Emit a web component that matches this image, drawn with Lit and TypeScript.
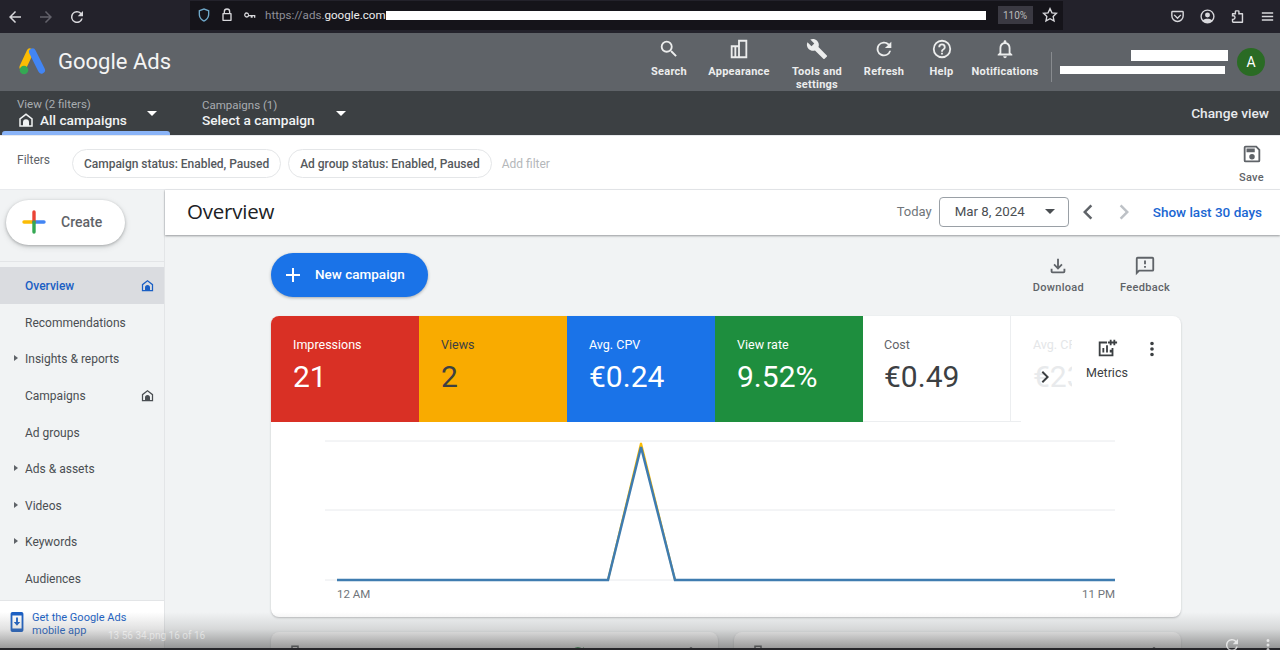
import { LitElement, html, css, svg } from "lit";
import { customElement } from "lit/decorators.js";

const ico = (d: string, size = 24, extra = "") =>
  html`<svg class="ic ${extra}" width=${size} height=${size} viewBox="0 0 24 24" fill="currentColor"><path d=${d}></path></svg>`;

const P = {
  search: "M15.5 14h-.79l-.28-.27A6.47 6.47 0 0 0 16 9.5 6.5 6.5 0 1 0 9.5 16c1.61 0 3.09-.59 4.23-1.57l.27.28v.79l5 4.99L20.490 19l-4.990-5zm-6 0C7.010 14 5 11.990 5 9.500S7.010 5 9.500 5 14 7.010 14 9.500 11.990 14 9.500 14z",
  appearance: "M11 2h10v20H3V8h8V2zm2 2v16h6V4h-6zM5 10v10h2V10H5zm4 0v10h2V10H9z",
  wrench: "M22.7 19l-9.1-9.1c.9-2.3.4-5-1.5-6.9-2-2-5-2.4-7.4-1.3L9 6 6 9 1.6 4.7C.4 7.1.9 10.1 2.9 12.1c1.9 1.9 4.6 2.4 6.9 1.5l9.1 9.1c.4.4 1 .4 1.4 0l2.300-2.300c.5-.4.5-1.100.1-1.400z",
  refresh: "M17.65 6.35A8 8 0 1 0 19.73 14h-2.08A6 6 0 1 1 12 6c1.66 0 3.14.69 4.22 1.78L13 11h7V4l-2.35 2.35z",
  help: "M11 18h2v-2h-2v2zm1-16a10 10 0 1 0 0 20 10 10 0 0 0 0-20zm0 18a8 8 0 1 1 0-16 8 8 0 0 1 0 16zm0-14a4 4 0 0 0-4 4h2a2 2 0 1 1 4 0c0 2-3 1.75-3 5h2c0-2.25 3-2.5 3-5a4 4 0 0 0-4-4z",
  bell: "M12 22a2 2 0 0 0 2-2h-4a2 2 0 0 0 2 2zm6-6v-5c0-3.07-1.63-5.64-4.5-6.32V4a1.5 1.5 0 0 0-3 0v.68C7.64 5.36 6 7.92 6 11v5l-2 2v1h16v-1l-2-2zm-2 1H8v-6c0-2.48 1.51-4.5 4-4.5s4 2.02 4 4.5v6z",
  home: "M12 3 3 10v11h18V10l-9-7zm7 16h-3v-4a4 4 0 0 0-8 0v4H5v-8l7-5.500 7 5.500v8z",
  save: "M17 3H5a2 2 0 0 0-2 2v14a2 2 0 0 0 2 2h14a2 2 0 0 0 2-2V7l-4-4zm2 16H5V5h11.17L19 7.83V19zm-7-7a3 3 0 1 0 0 6 3 3 0 0 0 0-6zM6 6h9v4H6V6z",
  download: "M18 15v3H6v-3H4v3a2 2 0 0 0 2 2h12a2 2 0 0 0 2-2v-3h-2zm-1-4-1.41-1.41L13 12.17V4h-2v8.17L8.41 9.59 7 11l5 5 5-5z",
  feedback: "M20 2H4a2 2 0 0 0-2 2v18l4-4h14a2 2 0 0 0 2-2V4a2 2 0 0 0-2-2zm0 14H5.17L4 17.17V4h16v12zM11 12h2v2h-2v-2zm0-6h2v4h-2V6z",
  metrics: "M19 3v2h-2V3h-2v2h-2v2h2v2h2V7h2v2h2V7h2V5h-2V3h-2zM3 5v16h16v-9h-2v7H5V7h7V5H3zm4 7h2v5H7v-5zm4-3h2v8h-2V9zm4 5h2v3h-2v-3z",
  dots: "M12 8a2 2 0 1 0 0-4 2 2 0 0 0 0 4zm0 2a2 2 0 1 0 0 4 2 2 0 0 0 0-4zm0 6a2 2 0 1 0 0 4 2 2 0 0 0 0-4z",
  left: "M15.4 7.4 14 6l-6 6 6 6 1.4-1.4L10.8 12z",
  right: "M8.6 16.6 10 18l6-6-6-6-1.4 1.4L13.2 12z",
  plus: "M19 13h-6v6h-2v-6H5v-2h6V5h2v6h6v2z",
  phone: "M17 1H7a2 2 0 0 0-2 2v18a2 2 0 0 0 2 2h10a2 2 0 0 0 2-2V3a2 2 0 0 0-2-2zM7 5h10v14H7V5zm4 2h2v5h2.5L12 16l-3.5-4H11V7z",
};

const tools = [
  ["Search", P.search],
  ["Appearance", P.appearance],
  ["Tools and settings", P.wrench],
  ["Refresh", P.refresh],
  ["Help", P.help],
  ["Notifications", P.bell],
];
const nav: [string, boolean, boolean][] = [
  ["Recommendations", false, false],
  ["Insights & reports", true, false],
  ["Campaigns", false, true],
  ["Ad groups", false, false],
  ["Ads & assets", true, false],
  ["Videos", true, false],
  ["Keywords", true, false],
  ["Audiences", false, false],
];
const tiles = [
  ["Impressions", "21", "red"],
  ["Views", "2", "yellow"],
  ["Avg. CPV", "€0.24", "blue"],
  ["View rate", "9.52%", "green"],
  ["Cost", "€0.49", "plain"],
];

@customElement("app-root")
export class AppRoot extends LitElement {
  static styles = css`
    :host { display: block; position: relative; width: 1280px; height: 650px; overflow: hidden; background: #f1f3f4; font-family: Roboto, "Liberation Sans", sans-serif; color: #3c4043; }
    .ic { display: block; flex: none; }
    .browser { height: 33px; background: #23222b; display: flex; align-items: center; color: #d8d8dc; }
    .bnav { width: 190px; display: flex; align-items: center; gap: 13px; padding-left: 6px; box-sizing: border-box; }
    .bnav .off { color: #63626b; }
    .url { width: 873px; height: 29px; margin-top: -3px; background: #15141a; display: flex; align-items: center; padding-left: 6px; box-sizing: border-box; font-size: 11.6px; position: relative; }
    .url .shield { color: #6fa8c9; }
    .url .lock { margin-left: 7px; }
    .url .key { margin: 0 7px; }
    .url .dim { color: #8f8f98; }
    .url .host { color: #eee; }
    .redact { background: #fff; height: 9px; }
    .url .redact { width: 600px; }
    .zoom { margin-left: 12px; width: 35px; height: 18px; background: #3a3942; color: #bbb; font-size: 10px; display: flex; align-items: center; justify-content: center; }
    .star { margin-left: 8px; fill: none; stroke: currentColor; stroke-width: 1.800; }
    .bright { margin-left: auto; display: flex; align-items: center; gap: 13px; padding-right: 4px; }
    .head { height: 58px; background: #5f6368; display: flex; align-items: center; color: #fff; padding-left: 18px; box-sizing: border-box; }
    .logo { display: flex; align-items: center; gap: 11px; font-size: 22px; font-family: Roboto, sans-serif; color: #f4f4f4; margin-top: -1px; }
    .tools { margin-left: auto; display: flex; align-items: flex-start; height: 58px; padding-top: 5px; box-sizing: border-box; }
    .tool { display: flex; flex-direction: column; align-items: center; font-size: 11px; font-weight: 700; line-height: 13px; text-align: center; color: #eceded; letter-spacing: .25px; }
    .tool svg { margin-bottom: 5px; }
    .vsep { width: 1px; height: 30px; background: #888b8f; margin: 10px 0 0 12px; }
    .account { width: 228px; height: 58px; position: relative; flex: none; }
    .acc1 { position: absolute; left: 79px; top: 17px; width: 97px; height: 11px; }
    .acc2 { position: absolute; left: 8px; top: 33px; width: 165px; height: 8px; }
    .avatar { position: absolute; left: 185px; top: 15px; width: 28px; height: 28px; border-radius: 50%; background: #2a6b24; font-size: 14px; display: flex; align-items: center; justify-content: center; }
    .sub { height: 45px; background: #3c4043; display: flex; color: #fff; box-sizing: border-box; border-bottom: 1px solid #e8eaed; }
    .view { width: 170px; padding: 6px 0 0 17px; box-sizing: border-box; position: relative; }
    .view small, .camp small { display: block; font-size: 11.500px; color: #a9adb1; line-height: 14px; }
    .camp small { line-height: 12px; }
    .view b, .camp b { display: flex; align-items: center; gap: 5px; font-size: 13.700px; font-weight: 500; line-height: 18px; color: #f1f3f4; }
    .underline { position: absolute; left: 2px; right: 0; bottom: 0; height: 4px; background: #8ab4f8; border-radius: 3px 3px 0 0; }
    .tri { width: 0; height: 0; border-left: 5px solid transparent; border-right: 5px solid transparent; border-top: 5px solid currentColor; flex: none; }
    .view .tri { position: absolute; left: 147px; top: 20px; }
    .camp { padding: 8px 0 0 32px; position: relative; display: flex; }
    .camp .tri { margin: 12px 0 0 21px; }
    .change { margin-left: auto; font-size: 13.700px; font-weight: 500; padding: 14px 11px 0 0; color: #e8eaed; }
    .filters { height: 54px; background: #fff; display: flex; align-items: flex-start; box-sizing: border-box; border-bottom: 1px solid #e8eaed; font-size: 12px; color: #5f6368; }
    .flabel { padding: 17px 0 0 17px; width: 72px; box-sizing: border-box; color: #5f6368; }
    .chips { display: flex; gap: 7px; padding-top: 13px; align-items: center; }
    .chip { height: 29px; border: 1px solid #e4e6e8; border-radius: 15px; padding: 0 11px; display: flex; align-items: center; color: #55595d; font-weight: 500; box-sizing: border-box; letter-spacing: -.02px; }
    .add { color: #b4b7ba; margin-left: 3px; }
    .save { margin-left: auto; display: flex; flex-direction: column; align-items: center; padding: 7px 16px 0 0; font-size: 11px; font-weight: 500; gap: 6px; color: #5f6368; letter-spacing: .3px; }
    .main { display: flex; height: 460px; }
    .side { width: 165px; flex: none; background: #f1f3f4; border-right: 1px solid #e3e5e7; box-sizing: border-box; display: flex; flex-direction: column; position: relative; }
    .createwrap { height: 72px; border-bottom: 1px solid #e3e5e7; padding: 10px 0 0 6px; box-sizing: border-box; }
    .create { width: 119px; height: 45px; background: #fff; border-radius: 23px; box-shadow: 0 1px 3px rgba(60,64,67,.35), 0 2px 6px rgba(60,64,67,.15); display: flex; align-items: center; gap: 15px; padding: 0 0 2px 16px; box-sizing: border-box; font-size: 14px; font-weight: 500; color: #5f6368; }
    .items { padding-top: 5px; }
    .item { height: 36.600px; display: flex; align-items: center; font-size: 12px; color: #4a4e52; padding-left: 25px; position: relative; }
    .item span.t { margin-top: 2px; }
    .item.active { background: #dadce0; color: #1a5fc4; font-weight: 500; }
    .item svg { position: absolute; left: 140px; top: 11px; color: #4a4e52; }
    .item.active svg { color: #1a5fc4; }
    .caret { position: absolute; left: 14px; top: 15px; width: 0; height: 0; border-top: 3px solid transparent; border-bottom: 3px solid transparent; border-left: 4px solid #5f6368; }
    .promo { position: absolute; left: 0; right: 0; top: 410px; height: 50px; background: #fff; border-top: 1px solid #e3e5e7; display: flex; gap: 4px; padding: 10px 0 0 6px; box-sizing: border-box; color: #1a5fc4; font-size: 11px; line-height: 13px; }
    .content { flex: 1; display: flex; flex-direction: column; min-width: 0; }
    .title { height: 45px; background: #fff; box-shadow: 0 1px 2px rgba(60,64,67,.5); flex: none; display: flex; align-items: center; padding: 0 18px 2px 22px; box-sizing: border-box; position: relative; }
    .title h1 { font-size: 20.500px; font-weight: 400; margin: 0 0 2px; color: #202124; font-family: "Open Sans", Roboto, sans-serif; letter-spacing: -.2px; }
    .today { margin-left: auto; font-size: 13px; color: #70757a; }
    .date { margin-left: 7px; width: 130px; height: 30px; border: 1px solid #9aa0a6; border-radius: 4px; display: flex; align-items: center; padding: 0 13px 0 15px; box-sizing: border-box; font-size: 13.300px; color: #4a4e52; justify-content: space-between; }
    .date .tri { color: #4a4e52; }
    .pager { display: flex; margin: 0 14px 0 4px; gap: 6px; color: #5f6368; }
    .pager .off { color: #bdc1c6; }
    .show { color: #1a66d2; font-size: 13.500px; font-weight: 500; }
    .body { width: 910px; margin-left: 106px; flex: none; position: relative; }
    .actions { display: flex; align-items: flex-start; height: 81px; padding-top: 18px; box-sizing: border-box; }
    .newc { width: 157px; height: 44px; border-radius: 22px; background: #1a73e8; color: #fff; display: flex; align-items: center; gap: 10px; padding-left: 10px; box-sizing: border-box; font-size: 13.500px; font-weight: 500; box-shadow: 0 1px 3px rgba(60,64,67,.4); }
    .newc span { margin-bottom: 2px; }
    .act { display: flex; flex-direction: column; align-items: center; font-size: 11px; font-weight: 500; color: #5f6368; gap: 4px; letter-spacing: .3px; margin-top: 2px; }
    .act.d { margin-left: auto; }
    .act.f { margin: 2px 11px 0 36px; }
    .card { height: 301px; background: #fff; border-radius: 8px; box-shadow: 0 1px 2px rgba(60,64,67,.3); position: relative; overflow: hidden; }
    .row { display: flex; height: 106px; }
    .tile { width: 148px; flex: none; box-sizing: border-box; padding: 21px 0 0 22px; color: #fff; }
    .tile span { display: block; font-size: 12.500px; line-height: 15px; }
    .tile strong { display: block; font-size: 30px; font-weight: 400; line-height: 40px; margin-top: 5px; }
    .red { background: #d93025; }
    .yellow { background: #f9ab00; color: #3c4043; }
    .blue { background: #1a73e8; }
    .green { background: #1e8e3e; }
    .plain { background: #fff; color: #5f6368; border-bottom: 1px solid #eceef0; padding-left: 21px; width: 147px; }
    .plain strong { color: #3c4043; }
    .faded { color: #e4e6e8; border-left: 1px solid #eceef0; border-bottom: 0; width: 62px; padding-left: 22px; overflow: hidden; white-space: nowrap; background: linear-gradient(#eceef0, #eceef0) left bottom / 10px 1px no-repeat; }
    .faded strong { color: #e8eaec; }
    .faded span, .faded strong { overflow: hidden; width: 39px; }
    .chev { position: absolute; left: 762px; top: 49px; color: #3c4043; }
    .mt { position: absolute; left: 815px; top: 21px; display: flex; flex-direction: column; align-items: center; font-size: 12.500px; color: #3c4043; gap: 6px; }
    .dots { position: absolute; left: 870px; top: 22px; color: #3c4043; }
    .chart { display: block; }
    .chart text { font-family: Roboto, "Liberation Sans", sans-serif; font-size: 11.500px; fill: #70757a; }
    .lower { display: flex; gap: 16px; margin-top: 15px; }
    .sec { flex: 1; height: 40px; background: #fff; border-radius: 8px; box-shadow: 0 1px 2px rgba(60,64,67,.3); display: flex; align-items: flex-start; padding: 12px 18px 0 12px; box-sizing: border-box; color: #3c4043; }
    .sec .end { margin-left: auto; }
    .sec .mid { margin-left: 268px; color: #1e8e3e; }
    .sec .mid + .end { margin-left: auto; }
    .veil { position: absolute; left: 0; right: 0; bottom: 0; height: 38px; background: linear-gradient(to bottom, rgba(120,120,120,0), rgba(120,120,120,.22) 45%, rgba(95,95,95,.62) 94%, #26262a 95%); pointer-events: none; display: flex; align-items: flex-start; color: rgba(255,255,255,.5); font-size: 10px; line-height: 12px; padding: 18px 3px 0 108px; box-sizing: border-box; }
    .veil .r { margin-left: auto; display: flex; gap: 18px; align-items: center; margin-top: 6px; color: rgba(255,255,255,.7); }
  `;

  render() {
    return html`
      <div class="browser">
        <div class="bnav">
          ${ico("M20 11H7.8l5.6-5.6L12 4l-8 8 8 8 1.4-1.4L7.8 13H20z", 18)}
          ${ico("M4 11h12.2l-5.6-5.6L12 4l8 8-8 8-1.4-1.4 5.6-5.6H4z", 18, "off")}
          ${ico(P.refresh, 18)}
        </div>
        <div class="url">
          ${ico("M12 2 4 5v6c0 5 3.4 9.7 8 11 4.6-1.3 8-6 8-11V5l-8-3zm0 2.200L18 6.400V11c0 4-2.500 7.700-6 8.900-3.500-1.200-6-4.900-6-8.900V6.400l6-2.200z", 16, "shield")}
          ${ico("M18 9h-1V7a5 5 0 0 0-10 0v2H6a1 1 0 0 0-1 1v10a1 1 0 0 0 1 1h12a1 1 0 0 0 1-1V10a1 1 0 0 0-1-1zM9 7a3 3 0 0 1 6 0v2H9V7zm8 12H7v-8h10v8z", 16, "lock")}
          ${ico("M7 8a4 4 0 1 0 3.600 6H13v2h3v-2h2v2h2v-4h-9.400A4 4 0 0 0 7 8zm0 2a2 2 0 1 1 0 4 2 2 0 0 1 0-4z", 16, "key")}
          <span class="dim">https://ads.</span><span class="host">google.com</span>
          <div class="redact"></div>
          <div class="zoom">110%</div>
          ${ico("M12 3.500l2.600 5.600 6 .7-4.400 4.100 1.200 6L12 17l-5.400 2.900 1.200-6L3.400 9.800l6-.7L12 3.500z", 18, "star")}
        </div>
        <div class="bright">
          ${ico("M5 4h14a2 2 0 0 1 2 2v5a9 9 0 0 1-18 0V6a2 2 0 0 1 2-2zm0 2v5a7 7 0 0 0 14 0V6H5zm3 3 4 4 4-4 1.400 1.400L12 15.800 6.600 10.400 8 9z", 17)}
          ${ico("M12 2a10 10 0 1 0 0 20 10 10 0 0 0 0-20zm0 2a8 8 0 0 1 6.200 13c-1.500-1.300-3.700-2-6.200-2s-4.700.700-6.200 2A8 8 0 0 1 12 4zm0 2.500a3.500 3.500 0 1 0 0 7 3.500 3.500 0 0 0 0-7z", 17)}
          ${ico("M10 3h3a2 2 0 0 1 2 2v2h4a1 1 0 0 1 1 1v12a1 1 0 0 1-1 1H6a2 2 0 0 1-2-2v-4h2a1.500 1.500 0 0 0 0-3H4V8a1 1 0 0 1 1-1h3V5a2 2 0 0 1 2-2zm0 2v4H6v1a3.500 3.500 0 0 1 0 7v2h12V9h-5V5h-3z", 17)}
          ${ico("M4 6h16v2H4zm0 5h16v2H4zm0 5h16v2H4z", 17)}
        </div>
      </div>
      <div class="head">
        <div class="logo">
          <svg width="29" height="29" viewBox="0 0 29 29">
            <path d="M12 5 5 20" stroke="#fbbc04" stroke-width="7" stroke-linecap="round"></path>
            <path d="M14.500 5 23.500 23" stroke="#4285f4" stroke-width="7" stroke-linecap="round"></path>
            <circle cx="6" cy="23" r="4.300" fill="#34a853"></circle>
          </svg>
          <span>Google Ads</span>
        </div>
        <div class="tools">
          ${tools.map(([n, d], i) => html`<div class="tool" style="width:${[36, 62, 54, 40, 25, 68][i]}px;margin-left:${[0, 21, 20, 20, 25, 17][i]}px">${ico(d, 22)}<span>${n}</span></div>`)}
        </div>
        <div class="vsep"></div>
        <div class="account">
          <div class="redact acc1"></div>
          <div class="redact acc2"></div>
          <div class="avatar">A</div>
        </div>
      </div>
      <div class="sub">
        <div class="view">
          <small>View (2 filters)</small>
          <b>${ico(P.home, 18)}<span>All campaigns</span></b>
          <div class="tri"></div>
          <div class="underline"></div>
        </div>
        <div class="camp">
          <div><small>Campaigns (1)</small><b>Select a campaign</b></div>
          <div class="tri"></div>
        </div>
        <div class="change">Change view</div>
      </div>
      <div class="filters">
        <div class="flabel">Filters</div>
        <div class="chips">
          <div class="chip">Campaign status: Enabled, Paused</div>
          <div class="chip">Ad group status: Enabled, Paused</div>
          <div class="add">Add filter</div>
        </div>
        <div class="save">${ico(P.save, 22)}<span>Save</span></div>
      </div>
      <div class="main">
        <aside class="side">
          <div class="createwrap">
            <div class="create">
              <svg width="24" height="24" viewBox="0 0 24 24" fill="none" stroke-width="3.400" stroke-linecap="round">
                <path d="M2 12h10" stroke="#fbbc04"></path><path d="M12 12h10" stroke="#4285f4"></path>
                <path d="M12 2v10" stroke="#ea4335"></path><path d="M12 12v10" stroke="#34a853"></path>
              </svg>
              <span>Create</span>
            </div>
          </div>
          <div class="items">
            <div class="item active"><span class="t">Overview</span>${ico(P.home, 15)}</div>
            ${nav.map(([n, c, h]) => html`<div class="item">${c ? html`<i class="caret"></i>` : ""}<span class="t">${n}</span>${h ? ico(P.home, 15) : ""}</div>`)}
          </div>
          <div class="promo">${ico(P.phone, 22)}<span>Get the Google Ads<br />mobile app</span></div>
        </aside>
        <div class="content">
          <div class="title">
            <h1>Overview</h1>
            <span class="today">Today</span>
            <div class="date"><span>Mar 8, 2024</span><i class="tri"></i></div>
            <div class="pager">${ico(P.left, 30)}${ico(P.right, 30, "off")}</div>
            <span class="show">Show last 30 days</span>
          </div>
          <div class="body">
            <div class="actions">
              <div class="newc">${ico(P.plus, 24)}<span>New campaign</span></div>
              <div class="act d">${ico(P.download, 22)}<span>Download</span></div>
              <div class="act f">${ico(P.feedback, 22)}<span>Feedback</span></div>
            </div>
            <div class="card">
              <div class="row">
                ${tiles.map(([l, v, c]) => html`<div class="tile ${c}"><span>${l}</span><strong>${v}</strong></div>`)}
                <div class="tile plain faded"><span>Avg. CPC</span><strong>€23</strong></div>
              </div>
              <div class="chev">${ico(P.right, 24)}</div>
              <div class="mt">${ico(P.metrics, 22)}<span>Metrics</span></div>
              <div class="dots">${ico(P.dots, 22)}</div>
              <svg class="chart" width="910" height="195" viewBox="0 0 910 195" fill="none">
                ${[19, 88, 158].map((y) => svg`<line x1="54" x2="844" y1=${y} y2=${y} stroke="#e8eaed"></line>`)}
                <path d="M66 158H337L370 21 404 158H844" stroke="#fbbc04" stroke-width="2"></path>
                <path d="M66 158H337L370 25 404 158H844" stroke="#3f7cb0" stroke-width="2.500"></path>
                <text x="66" y="176">12 AM</text>
                <text x="844" y="176" text-anchor="end">11 PM</text>
              </svg>
            </div>
            <div class="lower">
              <div class="sec">${ico(P.appearance, 18)}<span class="mid">${ico(P.refresh, 18)}</span><span class="end">${ico(P.dots, 18)}</span></div>
              <div class="sec">${ico(P.appearance, 18)}<span class="end">${ico(P.dots, 18)}</span></div>
            </div>
          </div>
        </div>
      </div>
      <div class="veil">
        <span>13 56 34.png 16 of 16</span>
        <div class="r">
          ${ico(P.refresh, 18)}
          ${ico(P.dots, 18)}
        </div>
      </div>
    `;
  }
}
